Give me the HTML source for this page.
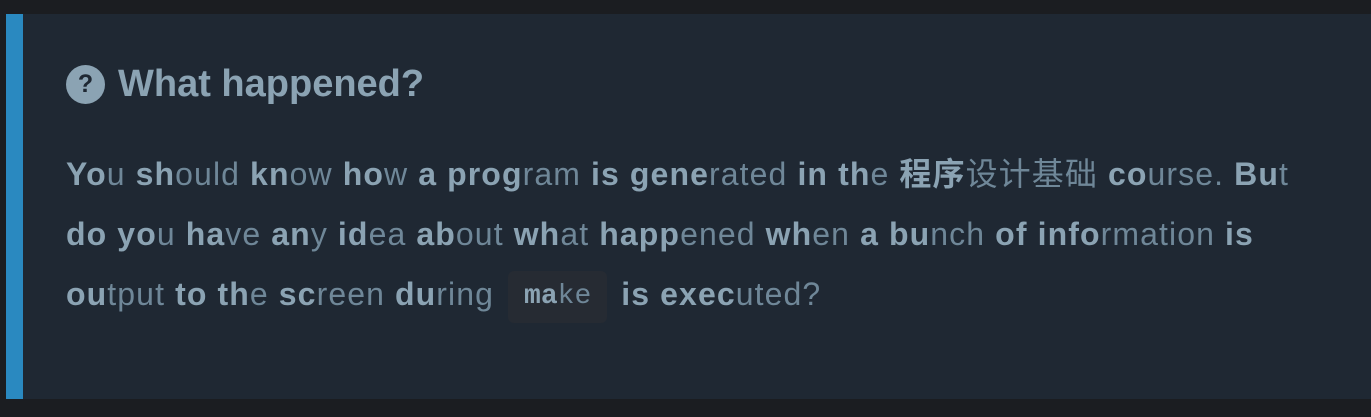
<!DOCTYPE html>
<html><head><meta charset="utf-8"><style>
html,body{margin:0;padding:0;background:#1b1d21;width:1371px;height:417px;overflow:hidden}
.card{position:absolute;left:6px;top:14px;width:1365px;height:385px;background:#1f2833;border-left:17px solid #2a89c0;box-sizing:border-box}
.h{position:absolute;left:43px;top:48px;height:44px;display:flex;align-items:center;font-family:"Liberation Sans",sans-serif;font-size:38px;color:#8ba3b3;font-weight:bold}
.ic{width:39px;height:39px;border-radius:50%;background:#8ba3b3;color:#1f2833;font-size:25px;font-weight:bold;display:flex;align-items:center;justify-content:center;margin-right:13px}
.p{position:absolute;left:43px;top:130px;font-family:"Liberation Sans","Noto Sans CJK SC",sans-serif;font-size:32px;line-height:60px;color:#6f8798;white-space:nowrap;letter-spacing:1.1px}
.p b{color:#8ba3b3;font-weight:bold}
code{display:inline-block;font-family:"Liberation Mono",monospace;font-size:28px;letter-spacing:0;background:#262b33;border-radius:6px;padding:0 16px;line-height:52px;vertical-align:middle;color:#6f8798;margin:0 4px}
code b{color:#a6b4c4}
</style></head><body>
<div class="card">
<div class="h"><div class="ic">?</div>What happened?</div>
<div class="p">
<b>Yo</b>u <b>sh</b>ould <b>kn</b>ow <b>ho</b>w <b>a</b> <b>prog</b>ram <b>is</b> <b>gene</b>rated <b>in</b> <b>th</b>e <b>程序</b>设计基础 <b>co</b>urse. <b>Bu</b>t<br>
<b>do</b> <b>yo</b>u <b>ha</b>ve <b>an</b>y <b>id</b>ea <b>ab</b>out <b>wh</b>at <b>happ</b>ened <b>wh</b>en <b>a</b> <b>bu</b>nch <b>of</b> <b>info</b>rmation <b>is</b><br>
<b>ou</b>tput <b>to</b> <b>th</b>e <b>sc</b>reen <b>du</b>ring <code><b>ma</b>ke</code> <b>is</b> <b>exec</b>uted?
</div>
</div>
</body></html>
